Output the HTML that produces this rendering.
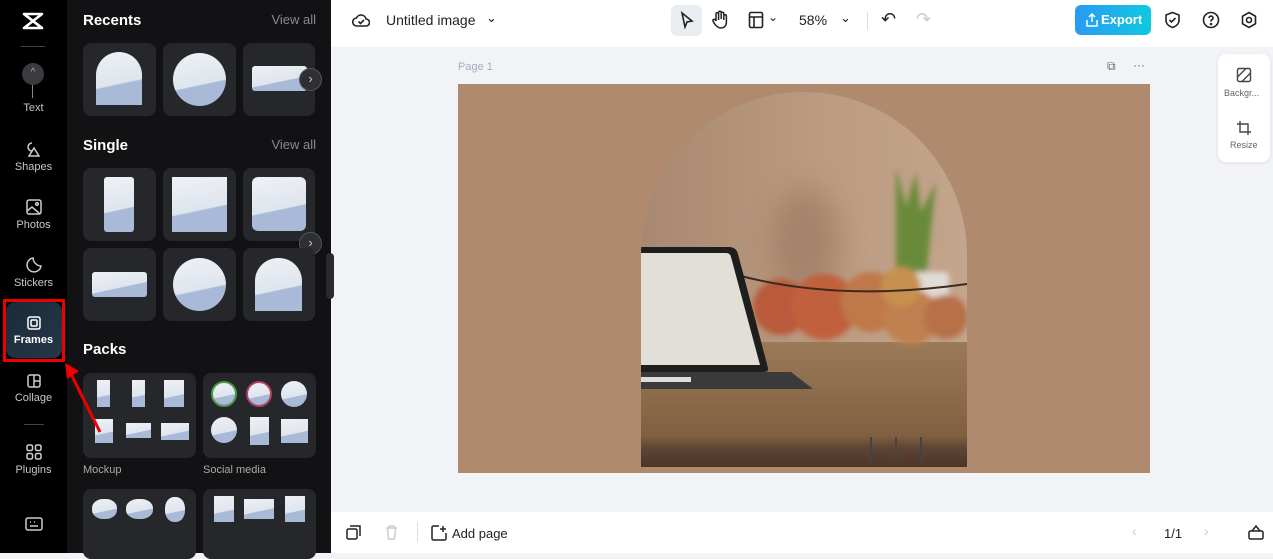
<!DOCTYPE html>
<html><head><meta charset="utf-8"><style>
*{box-sizing:border-box;margin:0;padding:0}
body{width:1273px;height:553px;overflow:hidden;font-family:"Liberation Sans",sans-serif;background:#f1f3f6;position:relative}
.abs{position:absolute}
#rail{left:0;top:0;width:67px;height:553px;background:#000}
.ri{position:absolute;left:0;width:67px;text-align:center;color:#c8c8c8;font-size:11px}
.ri svg{display:block;margin:0 auto 3px}
#panel{left:67px;top:0;width:264px;height:553px;background:#121214}
.h{position:absolute;color:#fff;font-weight:bold;font-size:15px}
.va{position:absolute;color:#8a8a8e;font-size:13px;right:15px}
.card{position:absolute;width:73px;height:73px;background:#26272b;border-radius:8px;overflow:hidden}
.sky{position:absolute;background:linear-gradient(168deg,#eef1f5 0%,#dfe5ee 58%,#a8bad8 60%,#a8bad8 100%)}
.nx{position:absolute;width:23px;height:23px;border-radius:50%;background:#2e2f33;border:1px solid #555;color:#ccc;font-size:13px;line-height:20px;text-align:center}
.pk{position:absolute;width:113px;height:85px;background:#26272b;border-radius:8px}
.lbl{position:absolute;color:#aaa;font-size:11px}
#top{left:331px;top:0;width:942px;height:47px;background:#fff}
#bot{left:331px;top:512px;width:942px;height:41px;background:#fff}
.t{position:absolute;font-size:14px;color:#222}
</style></head><body>
<div id="rail" class="abs">
 <svg class="abs" style="left:21px;top:11px" width="24" height="20" viewBox="0 0 24 20" fill="none" stroke="#fff" stroke-width="2.6" stroke-linejoin="round"><path d="M3 3h18L3 17h18z"/><path d="M3 3l18 14"/></svg>
 <div class="abs" style="left:21px;top:46px;width:24px;height:1px;background:#444"></div>
 <div class="abs" style="left:22px;top:63px;width:22px;height:22px;border-radius:50%;background:#3a3b3f;color:#aaa;font-size:10px;text-align:center;line-height:20px">^</div>
 <div class="abs" style="left:32px;top:85px;width:1px;height:13px;background:#888"></div>
 <div class="ri" style="top:102px">Text</div>
 <div class="ri" style="top:140px"><svg width="18" height="18" viewBox="0 0 18 18" fill="none" stroke="#ccc" stroke-width="1.5"><path d="M7 3a4 4 0 1 0 0 8M9 8l5 8H4z"/></svg>Shapes</div>
 <div class="ri" style="top:198px"><svg width="18" height="18" viewBox="0 0 18 18" fill="none" stroke="#ccc" stroke-width="1.5"><rect x="2" y="2" width="14" height="14" rx="2"/><path d="M2 13l5-4 8 7"/><circle cx="12" cy="6" r="1.3"/></svg>Photos</div>
 <div class="ri" style="top:256px"><svg width="18" height="18" viewBox="0 0 18 18" fill="none" stroke="#ccc" stroke-width="1.5"><path d="M16 10a7 7 0 1 1-8-8c0 4 4 8 8 8z"/></svg>Stickers</div>
 <div class="abs" style="left:3px;top:299px;width:62px;height:63px;border:3px solid #e00"></div>
 <div class="abs" style="left:6px;top:302px;width:56px;height:56px;border-radius:9px;background:linear-gradient(135deg,#1b2a38,#24384a)"></div>
 <div class="ri" style="top:315px;color:#fff;font-weight:bold"><svg width="16" height="16" viewBox="0 0 16 16" fill="none" stroke="#fff" stroke-width="1.5"><rect x="2" y="2" width="12" height="12" rx="2"/><rect x="5" y="5" width="6" height="6" rx="1"/></svg>Frames</div>
 <div class="ri" style="top:373px"><svg width="16" height="16" viewBox="0 0 16 16" fill="none" stroke="#ccc" stroke-width="1.5"><rect x="2" y="2" width="12" height="12" rx="2"/><path d="M8 2v12M8 8h6"/></svg>Collage</div>
 <div class="abs" style="left:24px;top:424px;width:20px;height:1px;background:#444"></div>
 <div class="ri" style="top:443px"><svg width="18" height="18" viewBox="0 0 18 18" fill="none" stroke="#ccc" stroke-width="1.5"><rect x="2" y="2" width="5.5" height="5.5" rx="1.5"/><rect x="10.5" y="2" width="5.5" height="5.5" rx="1.5"/><rect x="2" y="10.5" width="5.5" height="5.5" rx="1.5"/><rect x="10.5" y="10.5" width="5.5" height="5.5" rx="1.5"/></svg>Plugins</div>
 <div class="ri" style="top:517px"><svg width="18" height="14" viewBox="0 0 18 14" fill="none" stroke="#ccc" stroke-width="1.5"><rect x="1" y="1" width="16" height="12" rx="2"/><path d="M5 9h8M5 5h1M9 5h1M13 5h0"/></svg></div>
</div>
<div id="panel" class="abs">
 <div class="h" style="left:16px;top:12px">Recents</div><div class="va" style="top:12px">View all</div>
 <div class="card" style="left:16px;top:43px"><div class="sky" style="left:13px;top:9px;width:46px;height:53px;border-radius:23px 23px 0 0"></div></div>
 <div class="card" style="left:96px;top:43px"><div class="sky" style="left:10px;top:10px;width:53px;height:53px;border-radius:50%"></div></div>
 <div class="card" style="left:176px;top:43px;width:72px"><div class="sky" style="left:9px;top:23px;width:55px;height:25px;border-radius:3px"></div></div>
 <div class="nx" style="left:232px;top:68px">›</div>
 <div class="h" style="left:16px;top:137px">Single</div><div class="va" style="top:137px">View all</div>
 <div class="card" style="left:16px;top:168px"><div class="sky" style="left:21px;top:9px;width:30px;height:55px;border-radius:3px"></div></div>
 <div class="card" style="left:96px;top:168px"><div class="sky" style="left:9px;top:9px;width:55px;height:55px"></div></div>
 <div class="card" style="left:176px;top:168px;width:72px"><div class="sky" style="left:9px;top:9px;width:54px;height:54px;border-radius:6px"></div></div>
 <div class="nx" style="left:232px;top:232px">›</div>
 <div class="card" style="left:16px;top:248px"><div class="sky" style="left:9px;top:24px;width:55px;height:25px;border-radius:3px"></div></div>
 <div class="card" style="left:96px;top:248px"><div class="sky" style="left:10px;top:10px;width:53px;height:53px;border-radius:50%"></div></div>
 <div class="card" style="left:176px;top:248px;width:72px"><div class="sky" style="left:12px;top:10px;width:47px;height:53px;border-radius:23px 23px 0 0"></div></div>
 <div class="h" style="left:16px;top:341px">Packs</div>
 <div class="pk" style="left:16px;top:373px">
  <div class="sky" style="left:14px;top:7px;width:13px;height:27px"></div><div class="sky" style="left:49px;top:7px;width:13px;height:27px"></div><div class="sky" style="left:81px;top:7px;width:20px;height:27px"></div>
  <div class="sky" style="left:12px;top:46px;width:18px;height:24px"></div><div class="sky" style="left:43px;top:50px;width:25px;height:15px"></div><div class="sky" style="left:78px;top:50px;width:28px;height:17px"></div>
 </div>
 <div class="pk" style="left:136px;top:373px">
  <div class="sky" style="left:8px;top:8px;width:26px;height:26px;border-radius:50%;border:2px solid #4a9a4a"></div><div class="sky" style="left:43px;top:8px;width:26px;height:26px;border-radius:50%;border:2px solid #b04060"></div><div class="sky" style="left:78px;top:8px;width:26px;height:26px;border-radius:50%"></div>
  <div class="sky" style="left:8px;top:44px;width:26px;height:26px;border-radius:50%"></div><div class="sky" style="left:47px;top:44px;width:19px;height:28px"></div><div class="sky" style="left:78px;top:46px;width:27px;height:24px"></div>
 </div>
 <div class="lbl" style="left:16px;top:464px">Mockup</div><div class="lbl" style="left:136px;top:464px">Social media</div>
 <div class="pk" style="left:16px;top:489px;height:70px">
  <div class="sky" style="left:9px;top:10px;width:25px;height:20px;border-radius:45%"></div><div class="sky" style="left:43px;top:10px;width:27px;height:20px;border-radius:45%"></div><div class="sky" style="left:82px;top:8px;width:20px;height:25px;border-radius:45%"></div>
 </div>
 <div class="pk" style="left:136px;top:489px;height:70px">
  <div class="sky" style="left:11px;top:7px;width:20px;height:26px"></div><div class="sky" style="left:41px;top:10px;width:30px;height:20px"></div><div class="sky" style="left:82px;top:7px;width:20px;height:26px"></div>
 </div>
 <div class="abs" style="left:259px;top:253px;width:8px;height:46px;background:#2a2a2e;border-radius:4px"></div>
</div>
<div id="top" class="abs">
 <svg class="abs" style="left:21px;top:11px" width="18" height="18" viewBox="0 0 18 18" fill="none" stroke="#222" stroke-width="1.6"><path d="M5 15h9a3.5 3.5 0 0 0 0-7 5 5 0 0 0-9.5-1A4 4 0 0 0 5 15z"/><path d="M6.5 10.5l2 2 3.5-3.5"/></svg>
 <div class="t" style="left:55px;top:12px">Untitled image</div>
 <div class="t" style="left:155px;top:10px;font-size:13px">⌄</div>
 <div class="abs" style="left:340px;top:5px;width:31px;height:31px;border-radius:6px;background:#e9ecf0"></div>
 <svg class="abs" style="left:348px;top:11px" width="16" height="18" viewBox="0 0 16 18" fill="none" stroke="#222" stroke-width="1.6"><path d="M3 2l10 8-5 1-2 5z"/></svg>
 <svg class="abs" style="left:380px;top:10px" width="18" height="20" viewBox="0 0 18 20" fill="none" stroke="#222" stroke-width="1.5"><path d="M5 11V4a1.3 1.3 0 0 1 2.6 0v6M7.6 9V2.5a1.3 1.3 0 0 1 2.6 0V9M10.2 9V3.5a1.3 1.3 0 0 1 2.6 0V10M12.8 10V6a1.3 1.3 0 0 1 2.6 0v6c0 4-2.5 6-5.5 6S5 16 3 13l-1-2a1.3 1.3 0 0 1 2.2-1.3L5 11"/></svg>
 <svg class="abs" style="left:417px;top:11px" width="16" height="18" viewBox="0 0 16 18" fill="none" stroke="#222" stroke-width="1.6"><rect x="1.5" y="1.5" width="13" height="15" rx="1.5"/><path d="M1.5 6h13M6 6v10.5"/></svg>
 <div class="t" style="left:437px;top:10px;font-size:12px">⌄</div>
 <div class="t" style="left:468px;top:12px;font-size:14px">58%</div>
 <div class="t" style="left:509px;top:10px;font-size:13px">⌄</div>
 <div class="abs" style="left:536px;top:12px;width:1px;height:18px;background:#ddd"></div>
 <div class="t" style="left:550px;top:9px;font-size:18px">↶</div>
 <div class="t" style="left:585px;top:9px;font-size:18px;color:#ccc">↷</div>
 <div class="abs" style="left:744px;top:5px;width:76px;height:30px;border-radius:6px;background:linear-gradient(90deg,#2a9af3,#10c8e0);color:#fff;font-weight:bold;font-size:13px;line-height:30px;padding-left:26px">Export</div>
 <svg class="abs" style="left:755px;top:13px" width="12" height="14" viewBox="0 0 12 14" fill="none" stroke="#fff" stroke-width="1.5"><path d="M6 9V1M3 4l3-3 3 3M1 7v6h10V7"/></svg>
 <svg class="abs" style="left:833px;top:11px" width="17" height="18" viewBox="0 0 17 18" fill="none" stroke="#222" stroke-width="1.6"><path d="M8.5 1.5L15 4v5c0 4-3 6.5-6.5 7.5C5 15.5 2 13 2 9V4z"/><path d="M5.5 9l2 2 4-4"/></svg>
 <svg class="abs" style="left:871px;top:11px" width="18" height="18" viewBox="0 0 18 18" fill="none" stroke="#222" stroke-width="1.6"><circle cx="9" cy="9" r="7.5"/><path d="M7 7a2 2 0 1 1 2.5 2c-.5.2-.5.8-.5 1.5"/><circle cx="9" cy="13" r=".5"/></svg>
 <svg class="abs" style="left:909px;top:11px" width="18" height="18" viewBox="0 0 18 18" fill="none" stroke="#222" stroke-width="1.6"><path d="M9 1.5l6.5 3.75v7.5L9 16.5l-6.5-3.75v-7.5z"/><circle cx="9" cy="9" r="2.5"/></svg>
</div>
<div class="abs" style="left:458px;top:61px;font-size:11px;color:#aab">Page 1</div>
<div class="abs" style="left:1107px;top:59px;font-size:12px;color:#667">⧉</div>
<div class="abs" style="left:1133px;top:58px;font-size:12px;color:#667">···</div>
<div class="abs" style="left:1218px;top:54px;width:52px;height:108px;background:#fff;border-radius:8px;box-shadow:0 1px 4px rgba(0,0,0,.08)"></div>
<svg class="abs" style="left:1236px;top:67px" width="16" height="16" viewBox="0 0 16 16" fill="none" stroke="#444" stroke-width="1.4"><rect x="1.5" y="1.5" width="13" height="13" rx="1.5"/><path d="M1.5 10l8.5-8.5M6 14.5l8.5-8.5"/></svg>
<div class="abs" style="left:1224px;top:88px;font-size:9px;color:#666">Backgr...</div>
<svg class="abs" style="left:1236px;top:120px" width="16" height="16" viewBox="0 0 16 16" fill="none" stroke="#444" stroke-width="1.4"><path d="M4 1v11h11M1 4h11v11"/></svg>
<div class="abs" style="left:1230px;top:140px;font-size:9px;color:#666">Resize</div>
<div class="abs" style="left:458px;top:84px;width:692px;height:389px;background:#b08a6e"></div>
<div class="abs" style="left:641px;top:92px;width:326px;height:375px;border-radius:163px 163px 0 0;overflow:hidden">
<svg width="326" height="375" viewBox="0 0 326 375">
 <defs>
  <linearGradient id="w" x1="0" y1="0" x2="1" y2="0"><stop offset="0" stop-color="#a88870"/><stop offset=".6" stop-color="#bc9c82"/><stop offset="1" stop-color="#c2a58c"/></linearGradient>
  <linearGradient id="tb" x1="0" y1="0" x2="0" y2="1"><stop offset="0" stop-color="#9a7a58"/><stop offset=".75" stop-color="#806040"/><stop offset=".85" stop-color="#5e4434"/><stop offset="1" stop-color="#4a362a"/></linearGradient>
  <filter id="b" x="-20%" y="-20%" width="140%" height="140%"><feGaussianBlur stdDeviation="3"/></filter>
  <filter id="b2" x="-50%" y="-50%" width="200%" height="200%"><feGaussianBlur stdDeviation="14"/></filter>
 </defs>
 <rect width="326" height="375" fill="url(#w)"/>
 <ellipse cx="165" cy="150" rx="35" ry="55" fill="#8a6a52" opacity=".45" filter="url(#b2)"/>
 <rect x="0" y="250" width="326" height="125" fill="url(#tb)"/>
 <g filter="url(#b)">
  <path d="M255 75l10 40 10-35 5 40 15-30-10 95h-30z" fill="#6a8a3a"/>
  <rect x="258" y="180" width="50" height="25" rx="4" fill="#e0dcd6"/>
  <circle cx="140" cy="215" r="28" fill="#b85a3a"/>
  <circle cx="183" cy="215" r="33" fill="#c0603c"/>
  <circle cx="230" cy="210" r="30" fill="#c0784a"/>
  <circle cx="270" cy="225" r="28" fill="#c08050"/>
  <circle cx="305" cy="225" r="22" fill="#b87048"/>
  <circle cx="260" cy="195" r="20" fill="#c89050"/>
 </g>
 <path d="M100 184Q200 210 326 192" stroke="#3a2a20" stroke-width="2" fill="none"/>
 <path d="M-5 155H88Q95 155 97 162L127 276Q128 280 122 280H-5z" fill="#1e1e1e"/>
 <path d="M-5 161H85Q89 161 90 165L119 273H-5z" fill="#e2ded8"/>
 <path d="M-5 280H150L172 297H-5z" fill="#3a3a3a"/>
 <rect x="0" y="285" width="50" height="5" fill="#ddd"/>
 <path d="M230 345v25M255 345v25M280 345v25" stroke="#444" stroke-width="2"/>
</svg>
</div>
<div id="bot" class="abs">
 <svg class="abs" style="left:15px;top:13px" width="15" height="15" viewBox="0 0 15 15" fill="none" stroke="#222" stroke-width="1.5"><rect x="1" y="4" width="10" height="10" rx="1.5"/><path d="M4 1h10v10"/></svg>
 <svg class="abs" style="left:54px;top:13px" width="13" height="15" viewBox="0 0 13 15" fill="none" stroke="#ccc" stroke-width="1.5"><path d="M1 3h11M4 3V1h5v2M2.5 3l1 11h6l1-11"/></svg>
 <div class="abs" style="left:86px;top:10px;width:1px;height:20px;background:#ddd"></div>
 <svg class="abs" style="left:100px;top:13px" width="16" height="16" viewBox="0 0 16 16" fill="none" stroke="#222" stroke-width="1.5"><path d="M8 1H2.5A1.5 1.5 0 0 0 1 2.5v11A1.5 1.5 0 0 0 2.5 15h11a1.5 1.5 0 0 0 1.5-1.5V8M12 1v6M9 4h6"/></svg>
 <div class="t" style="left:121px;top:14px;font-size:13px">Add page</div>
 <div class="t" style="left:801px;top:11px;color:#ccc">‹</div>
 <div class="t" style="left:833px;top:14px;font-size:13px">1/1</div>
 <div class="t" style="left:873px;top:11px;color:#ccc">›</div>
 <svg class="abs" style="left:917px;top:13px" width="16" height="15" viewBox="0 0 16 15" fill="none" stroke="#222" stroke-width="1.5"><rect x="1" y="6" width="14" height="8" rx="1.5"/><path d="M4 6l4-5 4 5"/></svg>
</div>
<svg class="abs" style="left:60px;top:360px" width="50" height="80" viewBox="0 0 50 80"><path d="M40 72L10 12" stroke="#e00" stroke-width="3"/><path d="M5 3l2 16 12-8z" fill="#e00"/></svg>
</body></html>
